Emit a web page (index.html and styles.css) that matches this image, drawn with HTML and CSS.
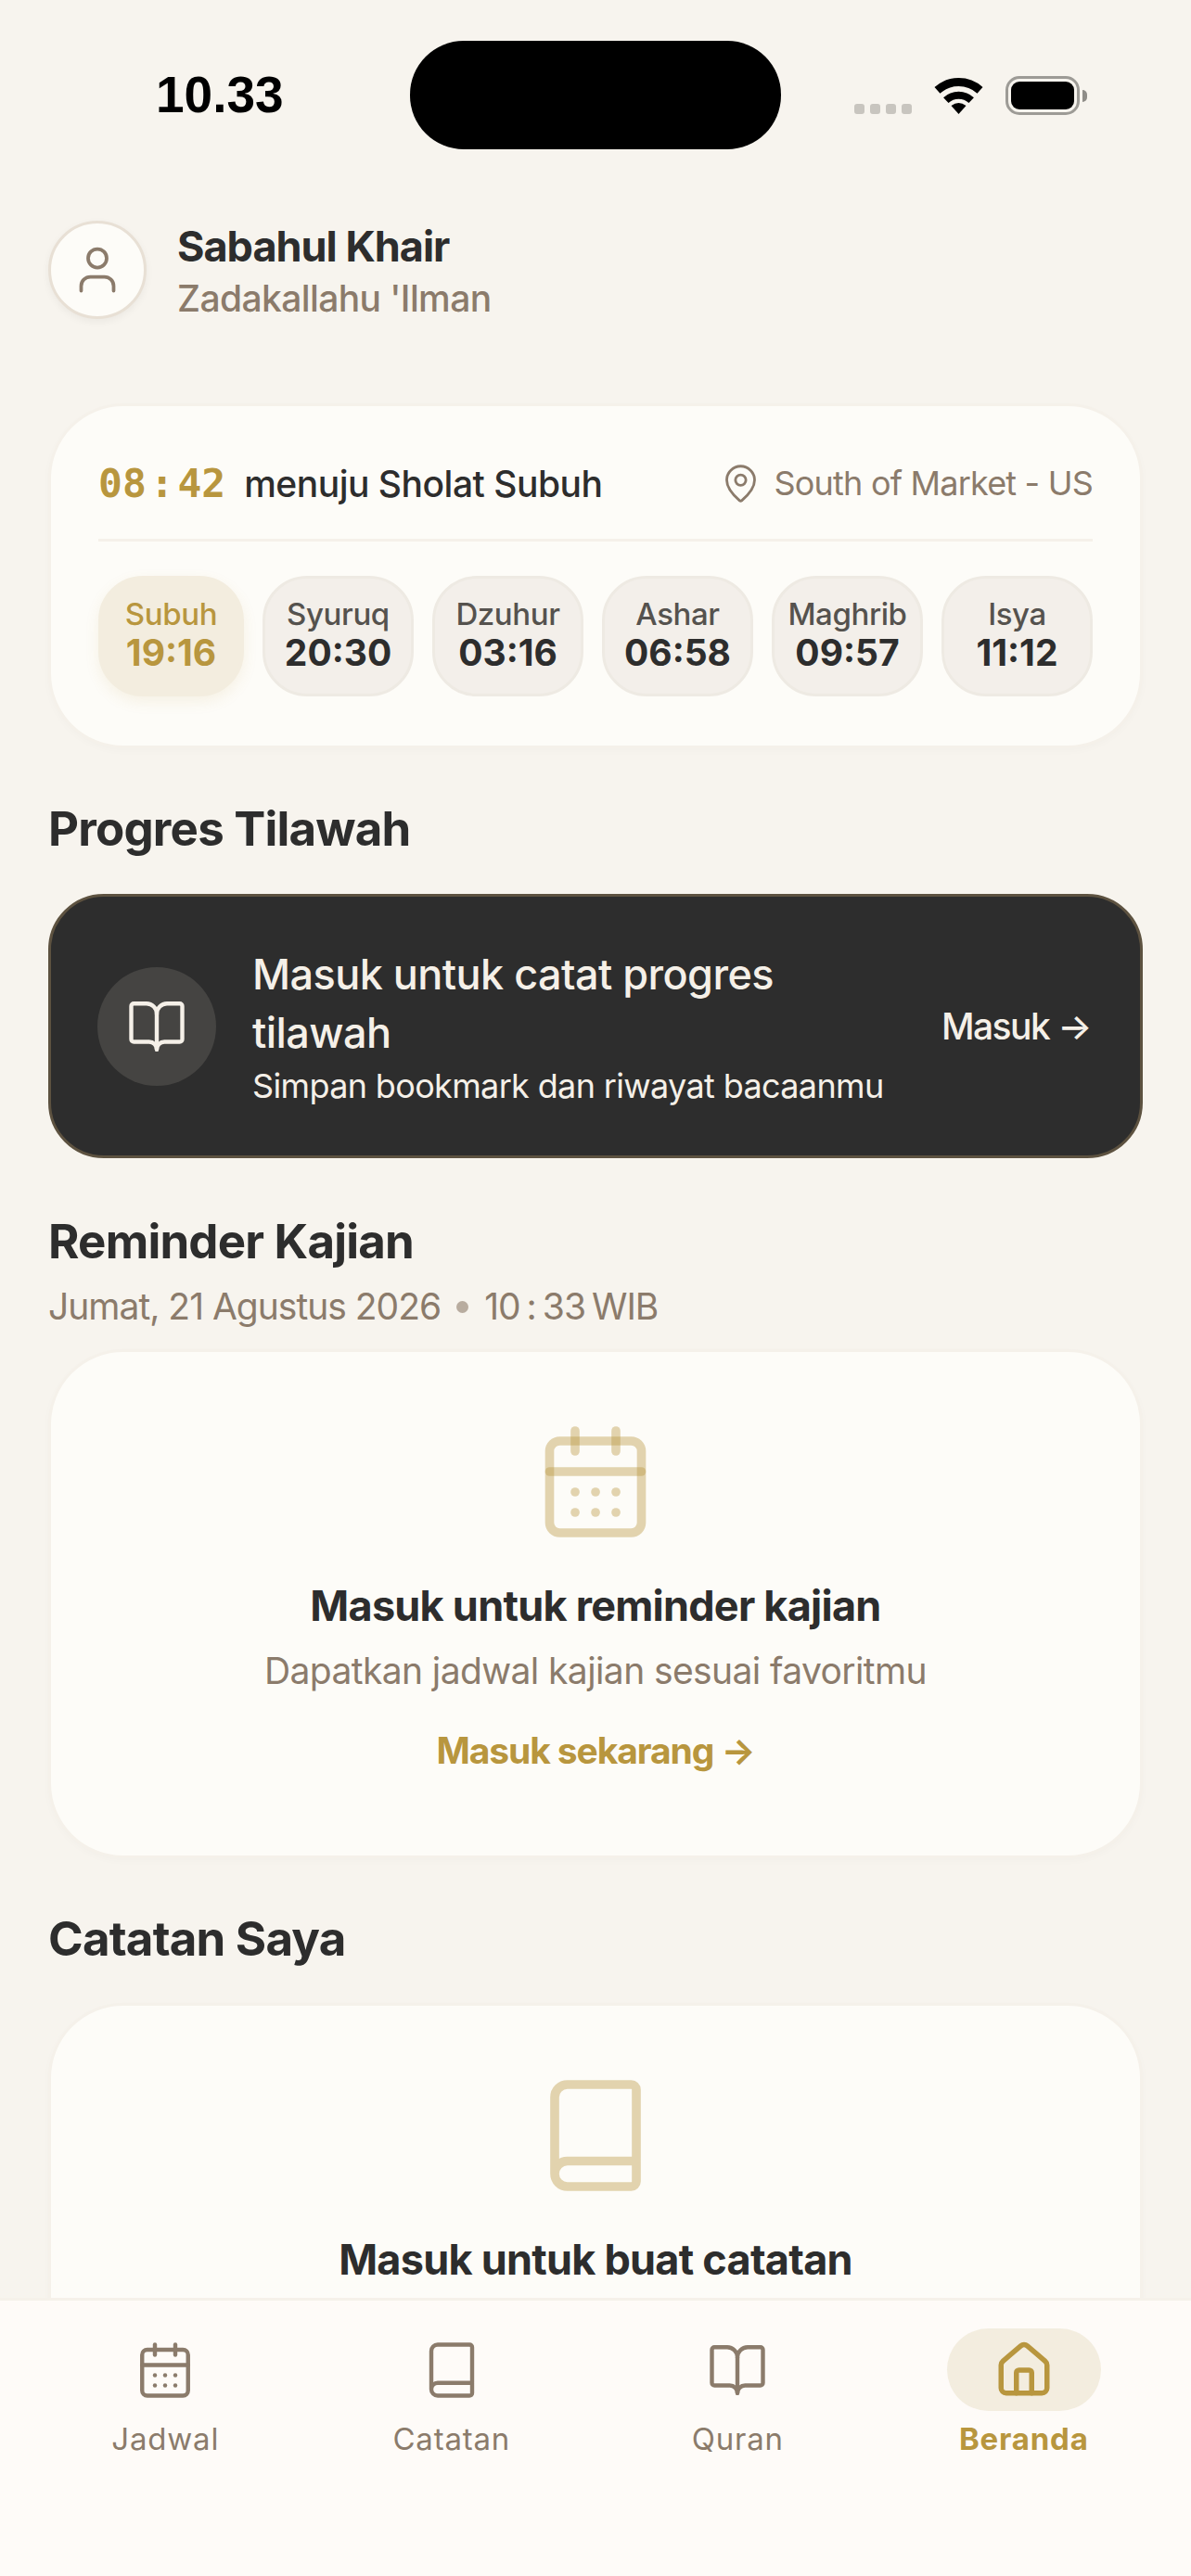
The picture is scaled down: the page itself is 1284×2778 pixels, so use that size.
FILE: index.html
```html
<!DOCTYPE html>
<html lang="id">
<head>
<meta charset="utf-8">
<title>Beranda</title>
<link rel="stylesheet" href="styles.css">
</head>
<body>
<div class="app">
  <main class="main">
    <div class="status">
      <div class="status-left"><span class="clock">10.33</span></div>
      <div class="island"></div>
      <div class="status-right">
        <div class="signal"><i></i><i></i><i></i><i></i></div>
        <svg class="wifi" viewBox="0 0 53 40"><path d="M3.5 14.4A34.5 34.5 0 0 1 49.5 14.4" fill="none" stroke="#000" stroke-width="9"/><path d="M12.8 25.2A20 20 0 0 1 40.2 25.2" fill="none" stroke="#000" stroke-width="8"/><path d="M26.5 40L18.5 31Q26.5 25 34.5 31Z" fill="#000"/></svg>
        <div class="battery"><div class="battery-body"><div class="battery-fill"></div></div><div class="battery-nub"></div></div>
      </div>
    </div>

    <header class="greet">
      <div class="avatar">
        <svg class="icon-60" viewBox="0 0 24 24"><path d="M19 21v-2a4 4 0 0 0-4-4H9a4 4 0 0 0-4 4v2"/><circle cx="12" cy="7" r="4"/></svg>
      </div>
      <div class="greet-text">
        <div class="greet-name">Sabahul Khair</div>
        <div class="greet-sub">Zadakallahu 'Ilman</div>
      </div>
    </header>

    <section class="card prayer">
      <div class="prayer-top">
        <div class="next">
          <span class="count">08 : 42</span>
          <span class="next-label">menuju Sholat Subuh</span>
        </div>
        <div class="loc">
          <svg class="icon-45" viewBox="0 0 24 24"><path d="M20 10c0 4.993-5.539 10.193-7.399 11.799a1 1 0 0 1-1.202 0C9.539 20.193 4 14.993 4 10a8 8 0 0 1 16 0"/><circle cx="12" cy="10" r="3"/></svg>
          <span>South of Market - US</span>
        </div>
      </div>
      <div class="pills">
        <div class="pill active"><span class="pill-name">Subuh</span><span class="pill-time">19:16</span></div>
        <div class="pill"><span class="pill-name">Syuruq</span><span class="pill-time">20:30</span></div>
        <div class="pill"><span class="pill-name">Dzuhur</span><span class="pill-time">03:16</span></div>
        <div class="pill"><span class="pill-name">Ashar</span><span class="pill-time">06:58</span></div>
        <div class="pill"><span class="pill-name">Maghrib</span><span class="pill-time">09:57</span></div>
        <div class="pill"><span class="pill-name">Isya</span><span class="pill-time">11:12</span></div>
      </div>
    </section>

    <h2 class="title">Progres Tilawah</h2>
    <section class="dark">
      <div class="dark-icon">
        <svg class="icon-66 light" viewBox="0 0 24 24"><path d="M12 7v14"/><path d="M3 18a1 1 0 0 1-1-1V4a1 1 0 0 1 1-1h5a4 4 0 0 1 4 4 4 4 0 0 1 4-4h5a1 1 0 0 1 1 1v13a1 1 0 0 1-1 1h-6a3 3 0 0 0-3 3 3 3 0 0 0-3-3z"/></svg>
      </div>
      <div class="dark-text">
        <div class="dark-title">Masuk untuk catat progres tilawah</div>
        <div class="dark-sub">Simpan bookmark dan riwayat bacaanmu</div>
      </div>
      <div class="dark-link">Masuk →</div>
    </section>

    <h2 class="title title-tight">Reminder Kajian</h2>
    <div class="date">Jumat, 21 Agustus 2026<span class="dot"></span><span class="date-time">10 : 33 WIB</span></div>
    <section class="card empty">
      <svg class="icon-132" viewBox="0 0 24 24"><path d="M8 2v4"/><path d="M16 2v4"/><rect x="3" y="4" width="18" height="18" rx="2"/><path d="M3 10h18"/><path d="M8 14h.01"/><path d="M12 14h.01"/><path d="M16 14h.01"/><path d="M8 18h.01"/><path d="M12 18h.01"/><path d="M16 18h.01"/></svg>
      <h3 class="empty-title">Masuk untuk reminder kajian</h3>
      <p class="empty-sub">Dapatkan jadwal kajian sesuai favoritmu</p>
      <div class="empty-link">Masuk sekarang →</div>
    </section>

    <h2 class="title">Catatan Saya</h2>
    <section class="card empty">
      <svg class="icon-132" viewBox="0 0 24 24"><path d="M4 19.5v-15A2.5 2.5 0 0 1 6.5 2H19a1 1 0 0 1 1 1v18a1 1 0 0 1-1 1H6.5a1 1 0 0 1 0-5H20"/></svg>
      <h3 class="empty-title">Masuk untuk buat catatan</h3>
    </section>
  </main>

  <nav class="nav">
    <div class="tab">
      <div class="tab-icon"><svg class="icon-66" viewBox="0 0 24 24"><path d="M8 2v4"/><path d="M16 2v4"/><rect x="3" y="4" width="18" height="18" rx="2"/><path d="M3 10h18"/><path d="M8 14h.01"/><path d="M12 14h.01"/><path d="M16 14h.01"/><path d="M8 18h.01"/><path d="M12 18h.01"/><path d="M16 18h.01"/></svg></div>
      <span>Jadwal</span>
    </div>
    <div class="tab">
      <div class="tab-icon"><svg class="icon-66" viewBox="0 0 24 24"><path d="M4 19.5v-15A2.5 2.5 0 0 1 6.5 2H19a1 1 0 0 1 1 1v18a1 1 0 0 1-1 1H6.5a1 1 0 0 1 0-5H20"/></svg></div>
      <span>Catatan</span>
    </div>
    <div class="tab">
      <div class="tab-icon"><svg class="icon-66" viewBox="0 0 24 24"><path d="M12 7v14"/><path d="M3 18a1 1 0 0 1-1-1V4a1 1 0 0 1 1-1h5a4 4 0 0 1 4 4 4 4 0 0 1 4-4h5a1 1 0 0 1 1 1v13a1 1 0 0 1-1 1h-6a3 3 0 0 0-3 3 3 3 0 0 0-3-3z"/></svg></div>
      <span>Quran</span>
    </div>
    <div class="tab tab-active">
      <div class="tab-icon"><svg class="icon-66" viewBox="0 0 24 24"><path d="M15 21v-8a1 1 0 0 0-1-1h-4a1 1 0 0 0-1 1v8"/><path d="M3 10a2 2 0 0 1 .709-1.528l7-5.999a2 2 0 0 1 2.582 0l7 5.999A2 2 0 0 1 21 10v9a2 2 0 0 1-2 2H5a2 2 0 0 1-2-2z"/></svg></div>
      <span>Beranda</span>
    </div>
  </nav>
</div>
</body>
</html>
```

FILE: styles.css
```css
* { box-sizing: border-box; }
html, body { margin: 0; padding: 0; }
body { background: #f7f4ee; font-family: Inter, "Noto Sans", sans-serif; color: #2d2d2d; }
h2, h3, p { margin: 0; }

.app { width: 1284px; height: 2778px; display: flex; flex-direction: column; overflow: hidden; }
.main { flex: 1; min-height: 0; overflow: hidden; padding: 44px 52px 0; }

/* status bar */
.status { display: flex; height: 117px; margin: 0 -52px; }
.status-left { width: 442px; padding: 27px 0 0 168px; }
.clock { font-family: "Liberation Sans", sans-serif; font-weight: 700; font-size: 55px; line-height: 62px; color: #000; }
.island { width: 400px; height: 117px; border-radius: 58px; background: #000; }
.status-right { flex: 1; display: flex; padding: 38px 0 0 79px; }
.signal { display: flex; gap: 6px; margin-top: 30px; height: 11px; }
.signal i { width: 11px; height: 11px; border-radius: 3px; background: #c8c5bf; }
.wifi { width: 53px; height: 40px; margin: 1px 24px 0 24px; }
.battery { display: flex; align-items: center; height: 42px; }
.battery-body { width: 80px; height: 42px; border: 3.5px solid #9d9b96; border-radius: 15px; padding: 3px; }
.battery-fill { width: 100%; height: 100%; border-radius: 9px; background: #000; }
.battery-nub { width: 5px; height: 13px; margin-left: 3px; border-radius: 0 6px 6px 0; background: #8f8d88; }

/* icon sizes */
svg[class^="icon-"] { fill: none; stroke-width: 1.5; stroke-linecap: round; stroke-linejoin: round; flex: none; display: block; }
.icon-60 { width: 60px; height: 60px; stroke: #8b7b6b; }
.icon-45 { width: 45px; height: 45px; stroke: #8b7b6b; }
.icon-66 { width: 66px; height: 66px; stroke: #8b7b6b; }
svg.icon-66 { stroke-width: 1.6; }
.icon-66.light { stroke: #f5f0e8; }
.icon-132 { width: 132px; height: 132px; stroke: #b8963e; stroke-opacity: .4; }
svg.icon-132 { stroke-width: 1.75; }

/* greeting */
.greet { display: flex; align-items: flex-start; gap: 33px; margin-top: 77px; }
.avatar { width: 106px; height: 106px; border-radius: 50%; background: #fdfcf8; border: 3px solid #e8e0d5; box-shadow: 0 3px 9px rgba(0,0,0,.05); display: flex; align-items: center; justify-content: center; }
.greet-text { display: flex; flex-direction: column; margin-top: 1px; }
.greet-name { font-size: 45px; line-height: 54px; font-weight: 700; letter-spacing: -1px; }
.greet-sub { font-size: 39px; line-height: 54px; font-weight: 500; color: #8b7b6b; margin-top: 2px; letter-spacing: -.6px; }

/* cards */
.card { background: #fdfcf8; border: 3px solid #f5f1ea; border-radius: 81px; box-shadow: 0 3px 9px rgba(60,50,30,.02); }

.prayer { margin-top: 86px; padding: 50px 51px 53px; }
.prayer-top { display: flex; justify-content: space-between; align-items: center; padding-bottom: 27px; border-bottom: 3px solid #f5f1ea; height: 96px; }
.next { display: flex; align-items: center; gap: 20px; }
.count { font-family: "DejaVu Sans Mono", monospace; font-weight: 700; font-size: 43px; word-spacing: -22px; color: #b8963e; }
.next-label { font-size: 39px; font-weight: 500; letter-spacing: -.5px; }
.loc { display: flex; align-items: center; gap: 14px; font-size: 36px; color: #8b7b6b; letter-spacing: -.8px; }

.pills { display: grid; grid-template-columns: 157px repeat(5, 1fr); gap: 20px; margin-top: 37px; }
.pill { height: 130px; border-radius: 48px; background: #f3efea; border: 3px solid #eeeae3; padding-bottom: 6px; display: flex; flex-direction: column; align-items: center; justify-content: center; }
.pill.active { background: #f3eddf; border-color: #f3eddf; box-shadow: 0 6px 15px rgba(184,150,62,.1); }
.pill-name { font-size: 33px; line-height: 42px; font-weight: 500; color: #55524e; letter-spacing: -.4px; }
.pill-time { font-size: 39px; line-height: 42px; font-weight: 700; }
.pill.active .pill-name, .pill.active .pill-time { color: #b8963e; }

/* titles */
.title { font-size: 51px; line-height: 60px; font-weight: 700; margin-top: 57px; letter-spacing: -.8px; }
.title-tight { margin-top: 60px; }

/* dark */
.dark { margin-top: 40px; height: 285px; display: flex; align-items: center; gap: 39px; padding: 0 53px 0 50px; background: #2d2d2d; border: 3px solid #5d5240; border-radius: 60px; }
.dark-icon { width: 128px; height: 128px; border-radius: 50%; background: #454442; display: flex; align-items: center; justify-content: center; flex: none; }
.dark-text { flex: 1; min-width: 0; color: #f5f0e8; }
.dark-title { font-size: 45px; line-height: 63px; font-weight: 500; letter-spacing: -.55px; }
.dark-sub { font-size: 36px; line-height: 48px; margin-top: 2px; letter-spacing: -.65px; white-space: nowrap; }
.dark-link { font-size: 39px; font-weight: 500; color: #f5f0e8; flex: none; letter-spacing: -1.5px; }

/* date */
.date { margin-top: 16px; font-size: 39px; line-height: 48px; color: #8b7b6b; display: flex; align-items: center; letter-spacing: -1px; }
.date-time { word-spacing: -3px; }
.dot { width: 13px; height: 13px; border-radius: 50%; background: #b8ac9f; margin: 0 17px; }

/* empty states */
.date + .empty { margin-top: 22px; }
.title + .empty { margin-top: 39px; }
.empty { display: flex; flex-direction: column; align-items: center; padding: 74px 48px 89px; text-align: center; }
.empty-title { margin-top: 39px; font-size: 45px; line-height: 57px; font-weight: 700; letter-spacing: -.75px; }
.empty-sub { margin-top: 18px; font-size: 39px; line-height: 48px; color: #8b7b6b; letter-spacing: -.6px; }
.empty-link { margin-top: 38px; font-size: 39px; line-height: 48px; font-weight: 700; color: #b8963e; letter-spacing: -1.1px; }

/* nav */
.nav { height: 300px; flex: none; display: flex; padding: 30px 26px 0 24px; background: #fefbf8; border-top: 3px solid #f5f1ea; }
.tab { flex: 1; display: flex; flex-direction: column; align-items: center; font-size: 33px; font-weight: 400; line-height: 42px; color: #8b7b6b; letter-spacing: .8px; }
.tab-icon { width: 166px; height: 89px; border-radius: 45px; display: flex; align-items: center; justify-content: center; margin-bottom: 9px; }
.tab-active { color: #b8963e; font-weight: 700; }
.tab-active .tab-icon { background: #f3eddf; }
.tab-active svg.icon-66 { stroke: #b8963e; stroke-width: 2; }
```
